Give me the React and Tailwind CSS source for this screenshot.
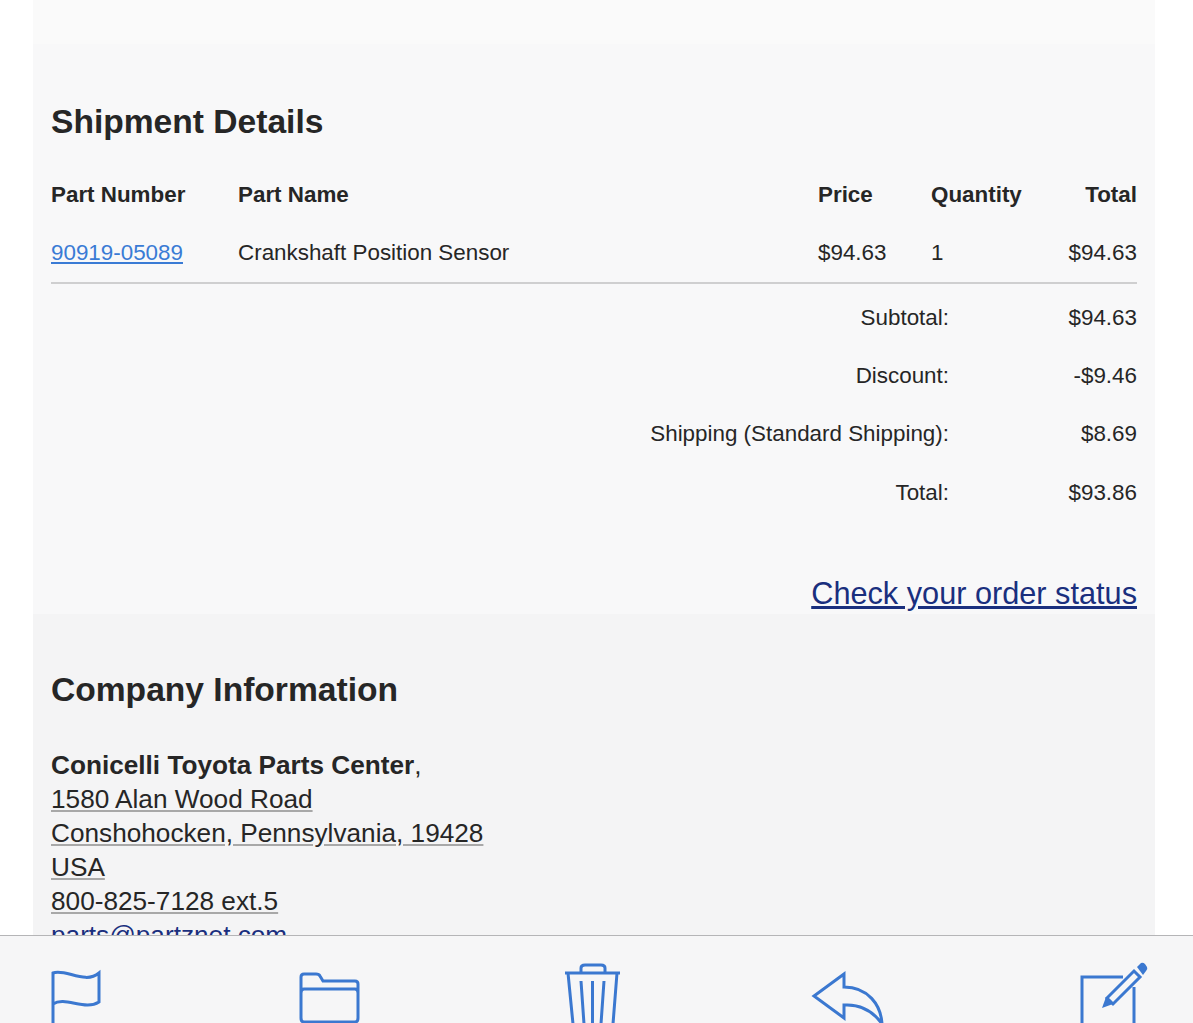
import React from "react"

const summary = [
  ["Subtotal:", "$94.63"],
  ["Discount:", "-$9.46"],
  ["Shipping (Standard Shipping):", "$8.69"],
  ["Total:", "$93.86"],
]

const address = ["1580 Alan Wood Road", "Conshohocken, Pennsylvania, 19428", "USA", "800-825-7128 ext.5"]

const gridCols = "grid grid-cols-[187px_580px_113px_1fr_auto] items-center"

// toolbar icons use page coordinates in the viewBox
const Icon = ({ box, className, children }) => (
  <svg
    viewBox={`${box[0]} 936 ${box[1]} 87`}
    width={box[1]}
    height={87}
    fill="none"
    stroke="#3b78d0"
    strokeWidth="3"
    className={`shrink-0 ${className}`}
  >
    {children}
  </svg>
)

const App = () => {
  return (
    <div className="relative h-[1023px] overflow-hidden bg-white font-['Liberation_Sans',Arial,sans-serif] text-[#262626]">
      <div className="ml-[33px] w-[1122px]">
        <div className="h-[44px] bg-[#fafafa]"></div>

        {/* Shipment details */}
        <div className="h-[570px] bg-[#f8f8f9] px-[18px] pt-[58px]">
          <h2 className="text-[33.6px] leading-[40px] font-bold">Shipment Details</h2>
          <div className="mt-[24px] text-[22.4px]">
            <div className={`${gridCols} h-[58px] font-bold`}>
              <span>Part Number</span>
              <span>Part Name</span>
              <span>Price</span>
              <span>Quantity</span>
              <span>Total</span>
            </div>
            <div className={`${gridCols} h-[60px] border-b-2 border-[#cfcfd0]`}>
              <a className="text-[#3a7bd5] underline">90919-05089</a>
              <span>Crankshaft Position Sensor</span>
              <span>$94.63</span>
              <span>1</span>
              <span>$94.63</span>
            </div>
            <div className="mt-[4.5px]">
              {summary.map(([label, value]) => (
                <div key={label} className="flex h-[58.3px] items-center">
                  <span className="w-[898px] text-right">{label}</span>
                  <span className="flex-1 text-right">{value}</span>
                </div>
              ))}
            </div>
          </div>
          <div className="mt-[52.5px] text-right text-[30.7px] leading-[40px]">
            <a className="text-[#1a2f7e] underline">Check your order status</a>
          </div>
        </div>

        {/* Company information */}
        <div className="h-[420px] bg-[#f4f4f5] px-[18px] pt-[56px]">
          <h2 className="text-[33.6px] leading-[40px] font-bold">Company Information</h2>
          <div className="mt-[38px] text-[26.2px] leading-[34px]">
            <div>
              <b>Conicelli Toyota Parts Center</b>,
            </div>
            {address.map((line) => (
              <div key={line}>
                <span className="underline decoration-[#a8a8a8]">{line}</span>
              </div>
            ))}
            <div className="text-[#1a2f7e]">parts@partznet.com</div>
          </div>
        </div>
      </div>

      {/* Bottom toolbar */}
      <div className="absolute inset-x-0 bottom-0 flex h-[88px] border-t border-[#b5b5b7] bg-[#f6f6f7] pl-[51px]">
        <Icon box={[51, 50]} className="">
          <path d="M53 1024V973C65 968 85 985 99 973V1002C85 1011 65 996 53 1004" />
        </Icon>
        <Icon box={[299, 62]} className="ml-[198px]">
          <path d="M301 1018V977Q301 974 304 974H316Q319 974 320 976L323 981H355Q358 981 358 984V1018Q358 1022 355 1022H304Q301 1022 301 1018ZM301 993Q301 989 304 989H355Q358 989 358 993" />
        </Icon>
        <Icon box={[564, 58]} className="ml-[203px]">
          <path d="M565 973H620M581 972V968Q581 965 585 965H601Q605 965 605 968V972M568 973L573 1024M617 973L613 1024M581 981L584 1024M592.5 981V1024M604 981L601 1024" />
        </Icon>
        <Icon box={[810, 77]} className="ml-[188px]">
          <path d="M844 974L814 996L844 1018V1005C860 1004 873 1011 882 1024C881 1005 868 987 844 987Z" />
        </Icon>
        <Icon box={[1079, 70]} className="ml-[192px]">
          <path d="M1123 977H1082V1024M1134 987V1024" />
          <path d="M1107 998L1134 971L1140 977L1113 1004Z" />
          <path fill="#3b78d0" stroke="none" d="M1102 1008L1106 997L1113 1004Z" />
          <path fill="#3b78d0" stroke="none" d="M1137 967L1141 963Q1143 962 1145 964L1147 967Q1148 969 1146 971L1143 975Z" />
        </Icon>
      </div>
    </div>
  )
}

export default App
